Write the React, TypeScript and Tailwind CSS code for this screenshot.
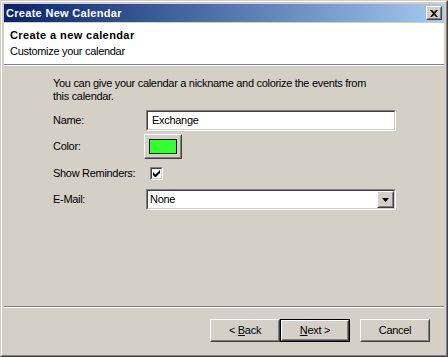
import React from "react";

const font = { fontFamily: '"Liberation Sans", Arial, sans-serif' };

// classic 3D raised edge
const Raised = ({ className = "", inner = "", children }: { className?: string; inner?: string; children?: React.ReactNode }) => (
  <div className={`border border-t-white border-l-white border-r-[#404040] border-b-[#404040] bg-[#d4d0c8] ${className}`}>
    <div className={`w-full h-full border border-t-[#d4d0c8] border-l-[#d4d0c8] border-r-[#808080] border-b-[#808080] ${inner}`}>
      {children}
    </div>
  </div>
);

const Sunken = ({ className = "", inner = "", children }: { className?: string; inner?: string; children?: React.ReactNode }) => (
  <div className={`border border-t-[#808080] border-l-[#808080] border-r-white border-b-white ${className}`}>
    <div className={`w-full h-full border border-t-[#404040] border-l-[#404040] border-r-[#d4d0c8] border-b-[#d4d0c8] bg-white ${inner}`}>
      {children}
    </div>
  </div>
);

const WizardButton = ({ children, isDefault }: { children: React.ReactNode; isDefault?: boolean }) => {
  if (isDefault) {
    return (
      <div className="w-[70px] h-[23px] border border-black">
        <Raised className="w-full h-full" inner="flex items-center justify-center text-[11px]">
          <span>{children}</span>
        </Raised>
      </div>
    );
  }
  return (
    <Raised className="w-[70px] h-[23px]" inner="flex items-center justify-center text-[11px]">
      <span>{children}</span>
    </Raised>
  );
};

export default function App() {
  return (
    <div className="w-[448px] h-[357px] text-black tracking-[-0.3px]" style={font}>
      <div className="w-full h-full border border-t-[#d4d0c8] border-l-[#d4d0c8] border-r-[#404040] border-b-[#404040]">
        <div className="w-full h-full border border-t-white border-l-white border-r-[#808080] border-b-[#808080] bg-[#d4d0c8] p-[2px] flex flex-col">
          {/* title bar */}
          <div className="h-[18px] shrink-0 bg-linear-to-r from-[#0a246a] to-[#a6caf0] flex items-center justify-between pl-[2px] pr-[2px]">
            <span className="text-white font-bold text-[11px] tracking-[0.3px] leading-[13px]">Create New Calendar</span>
            <Raised className="w-[16px] h-[14px]" inner="flex items-center justify-center">
              <svg width="8" height="7" viewBox="0 0 8 7">
                <path d="M0 0h2l2 2 2-2h2L5 3.5 8 7H6L4 5 2 7H0l3-3.5z" fill="black" />
              </svg>
            </Raised>
          </div>

          <div className="h-[1px] shrink-0" />

          {/* header */}
          <div className="h-[41px] shrink-0 bg-white pl-[6px] pt-[6px]">
            <div className="font-bold text-[11px] leading-[13px] tracking-[0.4px]">Create a new calendar</div>
            <div className="text-[11px] leading-[13px] mt-[3px]">Customize your calendar</div>
          </div>
          <div className="h-[1px] shrink-0 bg-[#808080]" />
          <div className="h-[1px] shrink-0 bg-white" />

          {/* body */}
          <div className="flex-1 pl-[49px] pt-[11px] text-[11px]">
            <p className="leading-[13px] w-[330px]">
              You can give your calendar a nickname and colorize the events from this calendar.
            </p>

            <div className="flex items-center mt-[7px] h-[21px]">
              <span className="w-[93px]">Name:</span>
              <Sunken className="w-[250px] h-[21px]" inner="flex items-center pl-[4px]">
                <span>Exchange</span>
              </Sunken>
            </div>

            <div className="flex items-center mt-[3px] h-[25px]">
              <span className="w-[91px]">Color:</span>
              <Raised className="w-[38px] h-[25px]" inner="flex items-center justify-center">
                <div className="w-[28px] h-[15px] border border-black bg-[#33ff33]" />
              </Raised>
            </div>

            <div className="flex items-center mt-[8px] h-[13px]">
              <span className="w-[97px]">Show Reminders:</span>
              <Sunken className="w-[13px] h-[13px]" inner="flex items-center justify-center">
                <svg width="7" height="7" viewBox="0 0 7 7">
                  <path d="M0 2v3l2 2h1l4-4V0L2.5 4.5z" fill="black" />
                </svg>
              </Sunken>
            </div>

            <div className="flex items-center mt-[9px] h-[21px]">
              <span className="w-[93px]">E-Mail:</span>
              <Sunken className="w-[250px] h-[21px]" inner="flex items-center justify-between pl-[2px]">
                <span>None</span>
                <Raised className="w-[17px] h-full" inner="flex items-center justify-center">
                  <svg width="7" height="4" viewBox="0 0 7 4">
                    <path d="M0 0h7L3.5 4z" fill="black" />
                  </svg>
                </Raised>
              </Sunken>
            </div>
          </div>

          {/* footer */}
          <div className="h-[1px] shrink-0 bg-[#808080]" />
          <div className="h-[1px] shrink-0 bg-white" />
          <div className="h-[45px] shrink-0 flex items-center justify-end pr-[14px]">
            <WizardButton>
              &lt;&nbsp;<span className="underline">B</span>ack
            </WizardButton>
            <WizardButton isDefault>
              <span className="underline">N</span>ext &gt;
            </WizardButton>
            <div className="w-[10px]" />
            <WizardButton>Cancel</WizardButton>
          </div>
        </div>
      </div>
    </div>
  );
}
